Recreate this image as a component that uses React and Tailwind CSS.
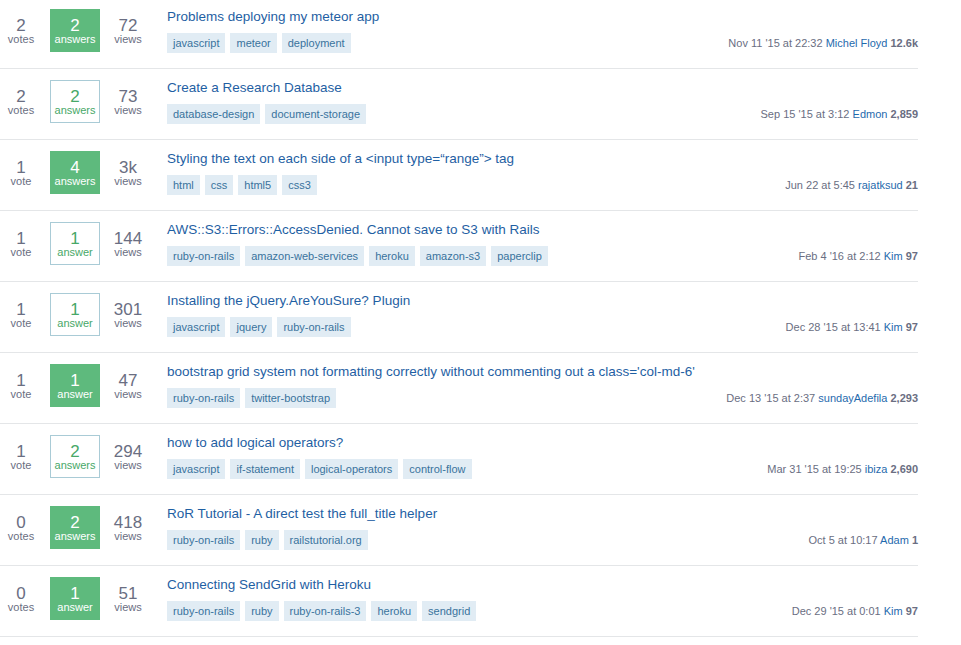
import React from "react";

const rows = [
  { votes: 2, answers: 2, accepted: true, views: "72", title: "Problems deploying my meteor app", tags: ["javascript", "meteor", "deployment"], date: "Nov 11 '15 at 22:32", user: "Michel Floyd", rep: "12.6k" },
  { votes: 2, answers: 2, accepted: false, views: "73", title: "Create a Research Database", tags: ["database-design", "document-storage"], date: "Sep 15 '15 at 3:12", user: "Edmon", rep: "2,859" },
  { votes: 1, answers: 4, accepted: true, views: "3k", title: "Styling the text on each side of a <input type=\u201crange\u201d> tag", tags: ["html", "css", "html5", "css3"], date: "Jun 22 at 5:45", user: "rajatksud", rep: "21" },
  { votes: 1, answers: 1, accepted: false, views: "144", title: "AWS::S3::Errors::AccessDenied. Cannot save to S3 with Rails", tags: ["ruby-on-rails", "amazon-web-services", "heroku", "amazon-s3", "paperclip"], date: "Feb 4 '16 at 2:12", user: "Kim", rep: "97" },
  { votes: 1, answers: 1, accepted: false, views: "301", title: "Installing the jQuery.AreYouSure? Plugin", tags: ["javascript", "jquery", "ruby-on-rails"], date: "Dec 28 '15 at 13:41", user: "Kim", rep: "97" },
  { votes: 1, answers: 1, accepted: true, views: "47", title: "bootstrap grid system not formatting correctly without commenting out a class='col-md-6'", tags: ["ruby-on-rails", "twitter-bootstrap"], date: "Dec 13 '15 at 2:37", user: "sundayAdefila", rep: "2,293" },
  { votes: 1, answers: 2, accepted: false, views: "294", title: "how to add logical operators?", tags: ["javascript", "if-statement", "logical-operators", "control-flow"], date: "Mar 31 '15 at 19:25", user: "ibiza", rep: "2,690" },
  { votes: 0, answers: 2, accepted: true, views: "418", title: "RoR Tutorial - A direct test the full_title helper", tags: ["ruby-on-rails", "ruby", "railstutorial.org"], date: "Oct 5 at 10:17", user: "Adam", rep: "1" },
  { votes: 0, answers: 1, accepted: true, views: "51", title: "Connecting SendGrid with Heroku", tags: ["ruby-on-rails", "ruby", "ruby-on-rails-3", "heroku", "sendgrid"], date: "Dec 29 '15 at 0:01", user: "Kim", rep: "97" },
];

function Row({ r }) {
  return (
    <div className="flex h-[71px] border-b border-[#e4e6e8] pt-[11px]">
      <div className="w-[42px] flex flex-col items-center text-[#6a6e82]">
        <div className="text-[17px] leading-[17px] mt-[8px]">{r.votes}</div>
        <div className="text-[11px] leading-[11px]">{r.votes === 1 ? "vote" : "votes"}</div>
      </div>
      <div
        className={
          "ml-[8px] w-[50px] h-[43px] flex flex-col items-center " +
          (r.accepted ? "bg-[#5eba7d] text-white" : "border border-[#a9cbd6] text-[#48a868]")
        }
      >
        <div className={"text-[17px] leading-[17px] " + (r.accepted ? "mt-[8px]" : "mt-[7px]")}>{r.answers}</div>
        <div className="text-[11px] leading-[11px]">{r.answers === 1 ? "answer" : "answers"}</div>
      </div>
      <div className="w-[56px] flex flex-col items-center text-[#6a6e82]">
        <div className="text-[17px] leading-[17px] mt-[8px]">{r.views}</div>
        <div className="text-[11px] leading-[11px]">views</div>
      </div>
      <div className="ml-[11px] flex-1 flex flex-col">
        <div className="text-[13.5px] leading-[16px] text-[#1f5fa3]">{r.title}</div>
        <div className="flex items-center justify-between mt-[8px]">
          <div className="flex gap-[5px]">
            {r.tags.map((t) => (
              <span key={t} className="h-[20px] px-[6px] bg-[#e1ecf4] text-[#39739d] text-[11px] leading-[20px]">
                {t}
              </span>
            ))}
          </div>
          <div className="text-[11px] leading-[13px] whitespace-nowrap mt-[1px]">
            <span className="text-[#6a6e82]">{r.date} </span>
            <span className="text-[#1f6aad]">{r.user} </span>
            <span className="text-[#6a6e82] font-bold">{r.rep}</span>
          </div>
        </div>
      </div>
    </div>
  );
}

export default function App() {
  return (
    <div className="w-[961px] h-[645px] overflow-hidden bg-white" style={{ fontFamily: "'Liberation Sans', Arial, sans-serif" }}>
      <div className="w-[918px] -mt-[2px]">
        {rows.map((r, i) => (
          <Row key={i} r={r} />
        ))}
      </div>
    </div>
  );
}
